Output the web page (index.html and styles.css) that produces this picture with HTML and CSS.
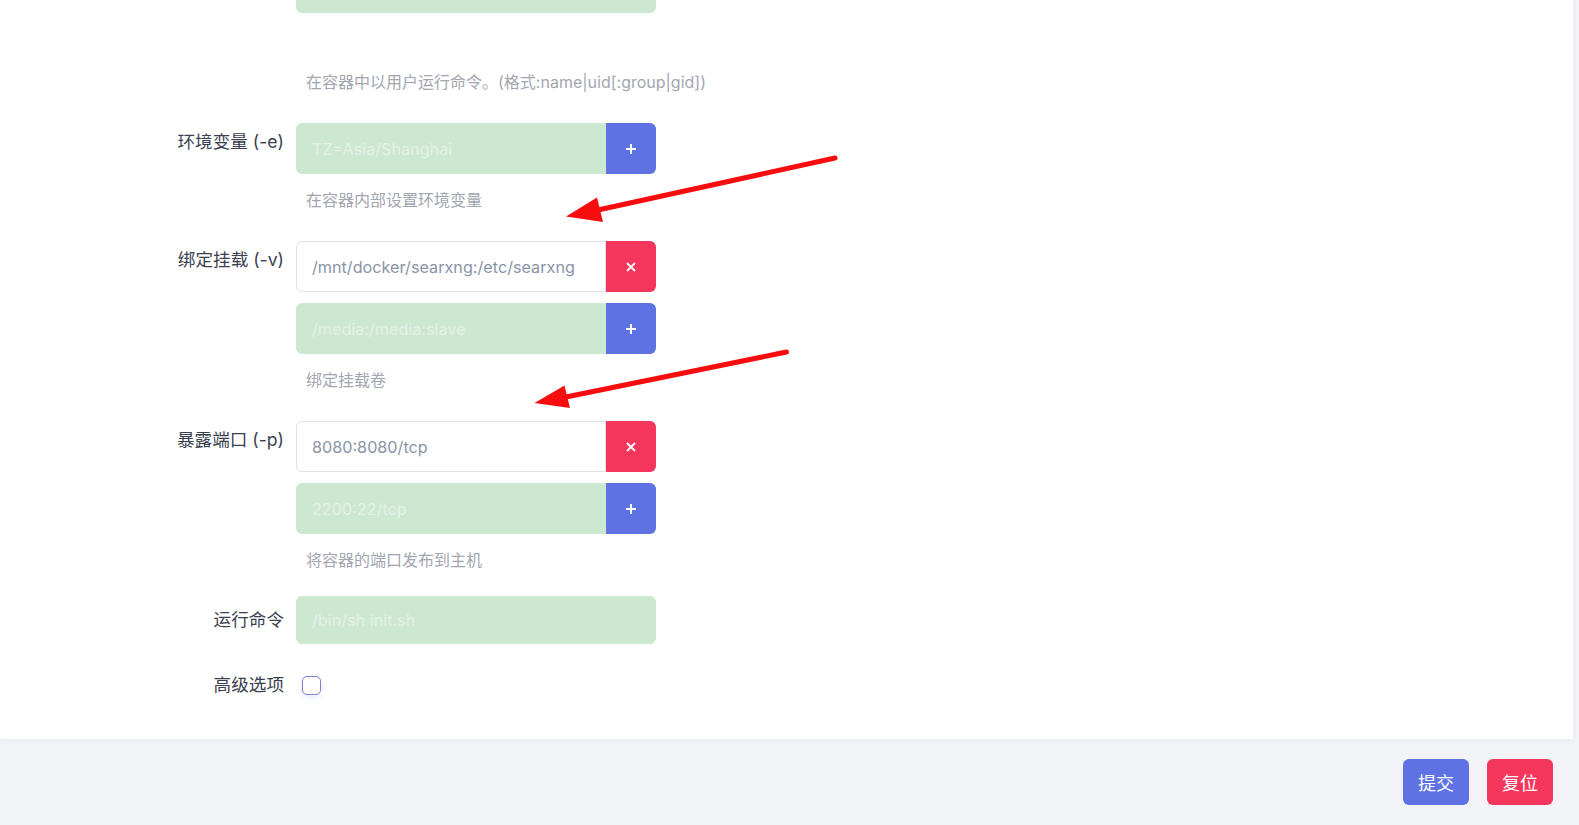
FILE: index.html
```html
<!DOCTYPE html>
<html lang="zh">
<head>
  <meta charset="UTF-8">
  <meta name="viewport" content="width=device-width,initial-scale=1.0">
  <title>创建容器</title>
  <link rel="stylesheet" href="styles.css">
</head>
<body>

<div class="card">

  <!-- 用户 -->
  <div class="row">
    <div class="label"></div>
    <div class="control">
      <div class="group"><input class="input fill"></div>
      <p class="help help-user">在容器中以用户运行命令。(格式:name|uid[:group|gid])</p>
    </div>
  </div>

  <!-- 环境变量 -->
  <div class="row">
    <div class="label">环境变量 (-e)</div>
    <div class="control">
      <div class="group">
        <input class="input fill" placeholder="TZ=Asia/Shanghai">
        <button class="btn-icon add"><svg width="12" height="12" viewBox="0 0 12 12"><path d="M6 1v10M1 6h10"/></svg></button>
      </div>
      <p class="help">在容器内部设置环境变量</p>
    </div>
  </div>

  <!-- 绑定挂载 -->
  <div class="row">
    <div class="label">绑定挂载 (-v)</div>
    <div class="control">
      <div class="group">
        <input class="input" value="/mnt/docker/searxng:/etc/searxng">
        <button class="btn-icon del"><svg width="10" height="10" viewBox="0 0 10 10"><path d="M1 1l8 8M9 1l-8 8"/></svg></button>
      </div>
      <div class="group">
        <input class="input fill" placeholder="/media:/media:slave">
        <button class="btn-icon add"><svg width="12" height="12" viewBox="0 0 12 12"><path d="M6 1v10M1 6h10"/></svg></button>
      </div>
      <p class="help">绑定挂载卷</p>
    </div>
  </div>

  <!-- 端口 -->
  <div class="row row-tight">
    <div class="label">暴露端口 (-p)</div>
    <div class="control">
      <div class="group">
        <input class="input" value="8080:8080/tcp">
        <button class="btn-icon del"><svg width="10" height="10" viewBox="0 0 10 10"><path d="M1 1l8 8M9 1l-8 8"/></svg></button>
      </div>
      <div class="group">
        <input class="input fill" placeholder="2200:22/tcp">
        <button class="btn-icon add"><svg width="12" height="12" viewBox="0 0 12 12"><path d="M6 1v10M1 6h10"/></svg></button>
      </div>
      <p class="help">将容器的端口发布到主机</p>
    </div>
  </div>

  <!-- 运行命令 -->
  <div class="row row-center row-cmd">
    <div class="label">运行命令</div>
    <div class="control">
      <div class="group group-sm"><input class="input fill" placeholder="/bin/sh init.sh"></div>
    </div>
  </div>

  <!-- 高级选项 -->
  <div class="row row-center row-last">
    <div class="label">高级选项</div>
    <div class="control">
      <span class="check"></span>
    </div>
  </div>

</div>

<div class="footer">
  <button class="btn btn-primary">提交</button>
  <button class="btn btn-danger">复位</button>
</div>

<!-- 标注箭头 -->
<svg class="marks" width="1579" height="825" viewBox="0 0 1579 825">
  <line x1="835" y1="158" x2="598" y2="210"/>
  <polygon points="566,216.5 597,197.5 603,222"/>
  <line x1="786.5" y1="352" x2="566" y2="397"/>
  <polygon points="534.5,403 564.5,385.5 570,408"/>
</svg>

</body>
</html>
```

FILE: styles.css
```css
:root{
  --c-bg:#f2f3f6; --c-card:#fff; --c-text:#3a3f51; --c-sub:#a2a6b0;
  --c-primary:#5e72e4; --c-danger:#f5365c; --c-fill:#cde8d0; --c-line:#dee2e6;
}
body{
  font-family:Inter,"Noto Sans CJK SC",sans-serif;
  background:var(--c-bg);color:var(--c-text);margin:0;overflow:hidden
}
.card{
  background:var(--c-card);margin:-38px 6px 0 0;padding-bottom:41px;
  box-shadow:0 0 6px rgba(0,0,0,.06)
}
.row{display:flex;align-items:flex-start;margin-bottom:29px}
.row-tight{margin-bottom:24px}
.row-cmd{margin-bottom:28px}
.row-last{margin-bottom:0}
.row-center{align-items:center}
.label{
  width:296px;box-sizing:border-box;padding:6px 12px 0 0;text-align:right;
  font-size:17.6px;line-height:26px;white-space:nowrap;min-height:26px
}
.row-center .label{padding-top:0}
.control{width:360px}
.group{display:flex;height:51px}
.group+.group{margin-top:11px}
.group-sm{height:48px}
.input{
  flex:1;min-width:0;box-sizing:border-box;border:1px solid var(--c-line);
  border-radius:6px;padding:0 15px;font:16.2px Inter,"Noto Sans CJK SC",sans-serif;
  color:#8a94a6;background:#fff;outline:none
}
.input.fill{background:var(--c-fill);border-color:var(--c-fill)}
.input.fill::placeholder{color:#e4f1e6}
.input:not(:last-child){border-radius:6px 0 0 6px}
.btn-icon{
  width:50px;border:none;border-radius:0 6px 6px 0;padding:0;
  display:flex;align-items:center;justify-content:center;cursor:pointer
}
.btn-icon svg{stroke:#fff;stroke-width:2;fill:none}
.btn-icon.add{background:var(--c-primary)}
.btn-icon.del{background:var(--c-danger)}
.btn-icon.del svg{stroke-width:1.8}
.help{margin:14px 0 0 10px;font-size:16px;line-height:24px;color:var(--c-sub);white-space:nowrap}
.help-user{margin-top:57px}
.check{
  display:block;width:19px;height:19px;box-sizing:border-box;margin-left:6px;
  border:1px solid #7b80c9;border-radius:5px;background:#fff;
  box-shadow:0 2px 6px rgba(94,114,228,.15)
}

.footer{display:flex;justify-content:flex-end;gap:18px;padding:20px 26px 0 0}
.btn{
  height:46px;padding:0 15px;border:none;border-radius:6px;color:#fff;
  font:18px "Noto Sans CJK SC",sans-serif;cursor:pointer
}
.btn-primary{background:var(--c-primary)}
.btn-danger{background:var(--c-danger)}

/* 标注 */
.marks{position:absolute;left:0;top:0;pointer-events:none}
.marks line{stroke:#f70d0d;stroke-width:5;stroke-linecap:round}
.marks polygon{fill:#f70d0d}
```
